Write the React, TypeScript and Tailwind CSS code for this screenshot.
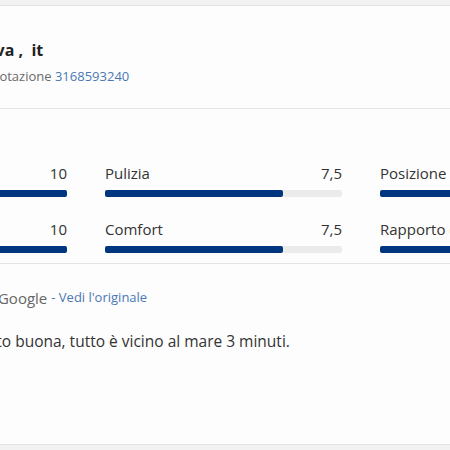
const ratings = [
  { label: 'Personale', score: '10', value: 100 },
  { label: 'Pulizia', score: '7,5', value: 75 },
  { label: 'Posizione', score: '10', value: 100 },
  { label: 'Servizi', score: '10', value: 100 },
  { label: 'Comfort', score: '7,5', value: 75 },
  { label: 'Rapporto qualità-prezzo', score: '10', value: 100 },
];

function RatingBar({ label, score, value }: { label: string; score: string; value: number }) {
  return (
    <div className="flex flex-col">
      <div className="flex h-[20px] items-center justify-between text-[15px] leading-[20px] text-[#333]">
        <span className="whitespace-nowrap">{label}</span>
        <span>{score}</span>
      </div>
      <div className="mt-[7px] h-[7px] w-full rounded-[2px] bg-[#ebebeb]">
        <div className="h-full rounded-[2px] bg-[#003580]" style={{ width: `${value}%` }} />
      </div>
    </div>
  );
}

export default function App() {
  return (
    <div
      className="h-[450px] w-[450px] overflow-hidden bg-[#f2f2f2] pt-[5px]"
      style={{ fontFamily: '"Open Sans", "Noto Sans", sans-serif' }}
    >
      <div className="h-[440px] border-y border-[#e2e2e2] bg-[#fdfdfd]">
        <div className="h-[103px] border-b border-[#e4e4e4] pt-[34px]">
          <div className="ml-[-23px] whitespace-nowrap text-[16px] font-bold leading-[20px] text-[#222]">
            Silva ,&nbsp; it
          </div>
          <div className="ml-[-29px] mt-[7px] whitespace-nowrap text-[13px] leading-[18px] text-[#6b6b6b]">
            Prenotazione <span className="text-[#4a78b5]">3168593240</span>
          </div>
        </div>

        <div className="border-b border-[#e4e4e4] pb-[10px] pt-[54px]">
          <div className="ml-[-170px] grid w-[787px] grid-cols-3 gap-x-[38px] gap-y-[22px]">
            {ratings.map((r) => (
              <RatingBar key={r.label} {...r} />
            ))}
          </div>
        </div>

        <div className="pt-[24px]">
          <div className="ml-[-88px] flex h-[20px] items-center whitespace-nowrap">
            <span className="text-[15px] text-[#666]">Tradotto da Google</span>
            <span className="ml-[4px] text-[13px] text-[#4a78b5]">- Vedi l'originale</span>
          </div>
          <p className="ml-[-104px] mt-[23px] whitespace-nowrap text-[15.5px] leading-[20px] text-[#333]">
            Posizione molto buona, tutto è vicino al mare 3 minuti.
          </p>
        </div>
      </div>
    </div>
  );
}
